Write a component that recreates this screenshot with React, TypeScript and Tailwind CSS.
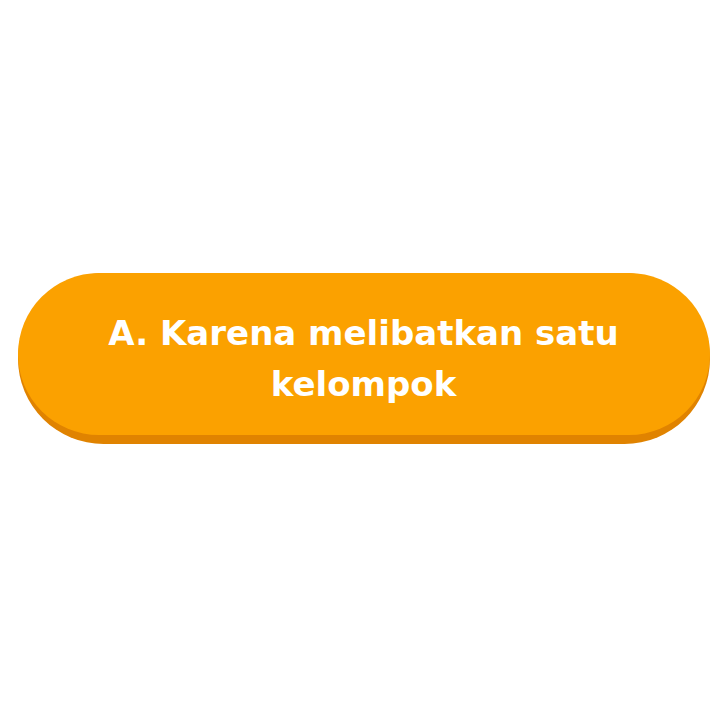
export default function App() {
  return (
    <div className="w-[720px] h-[720px] bg-white flex items-start justify-center">
      <div className="mt-[273px] ml-[7px] w-[692px] rounded-full bg-[#e08300] pb-[9px]">
        <div className="h-[162px] rounded-full bg-[#fba100] flex items-center justify-center px-[60px] pt-[10px]">
          <p
            className="text-white text-center font-bold text-[34px] leading-[51px]"
            style={{ fontFamily: "'DejaVu Sans', sans-serif" }}
          >
            A. Karena melibatkan satu kelompok
          </p>
        </div>
      </div>
    </div>
  );
}
